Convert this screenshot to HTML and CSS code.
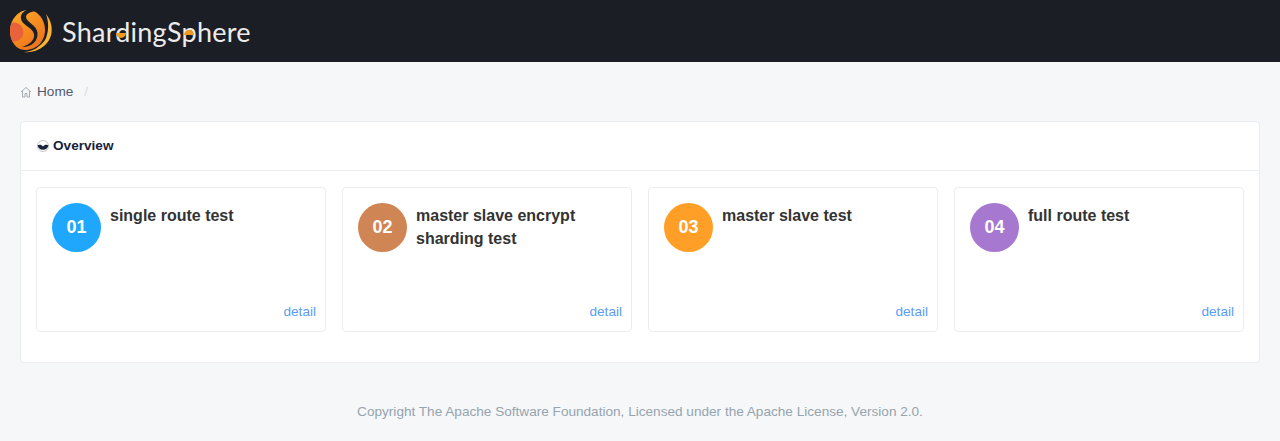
FILE: index.html
```html
<!DOCTYPE html>
<html lang="en">
<head>
<meta charset="utf-8">
<title>ShardingSphere</title>
<link rel="stylesheet" href="styles.css">
</head>
<body>
<header class="topbar">
  <svg class="logo-mark" viewBox="9 7 46 48" width="46" height="48" aria-hidden="true">
    <defs>
      <linearGradient id="fl" x1="0" y1="0" x2="0.6" y2="1">
        <stop offset="0" stop-color="#fbb02a"/>
        <stop offset="0.6" stop-color="#f58a1f"/>
        <stop offset="1" stop-color="#ee7420"/>
      </linearGradient>
      <clipPath id="massclip">
        <path d="M28 10C38 10 45 20 45 30C45 41 37 50 25 50C16 50 10 41 10 31C10 20 18 10 28 10Z"/>
      </clipPath>
    </defs>
    <path d="M46 14C54 24 54 38 44 46C38 51 30 53 24 52C32 52 40 47 45 40C49 33 49 22 46 14Z" fill="#f9b233"/>
    <path d="M28 10C38 10 45 20 45 30C45 41 37 50 25 50C16 50 10 41 10 31C10 20 18 10 28 10Z" fill="url(#fl)"/>
    <circle cx="14" cy="32" r="9.5" fill="#e8623a" clip-path="url(#massclip)"/>
    <path d="M32 8C24 10 20 14 21 19C22 25 32 27 34 34C35 39 31 44 22 47C32 47 38 41 37.5 33C37 25 26 22 26 17C26 14 30 12 35 11Z" fill="#1c1e26"/>
  </svg>
  <span class="logo-text">Sharding<span class="logo-half logo-half-low"></span>Sphere<span class="logo-half logo-half-high"></span></span>
</header>
<nav class="crumbs">
  <svg class="home-icon" viewBox="0 0 12 12" width="12" height="12" aria-hidden="true">
    <path d="M1 6L6 1.5L11 6M2.5 5V11H5V7.5H7V11H9.5V5" fill="none" stroke="#a4abb3" stroke-width="1"/>
  </svg>
  <a class="crumb-link">Home</a>
  <span class="crumb-sep">/</span>
</nav>
<main class="panel">
  <div class="panel-head">
    <svg class="panel-icon" viewBox="0 0 12 12" width="12" height="12" aria-hidden="true">
      <circle cx="6" cy="6" r="5.5" fill="#fff" stroke="#b9b4b2" stroke-width="0.8"/>
      <path d="M0.6 5.2C2.5 4.2 4.6 4.6 6 6.4C7.4 4.6 9.5 4.2 11.4 5.2A5.5 5.5 0 0 1 0.6 5.2Z" fill="#17233d"/>
    </svg>
    <span class="panel-title">Overview</span>
  </div>
  <div class="panel-body">
    <article class="tile">
      <div class="tile-main"><span class="badge badge-blue">01</span><span class="tile-title">single route test</span></div>
      <a class="tile-link">detail</a>
    </article>
    <article class="tile">
      <div class="tile-main"><span class="badge badge-brown">02</span><span class="tile-title">master slave encrypt sharding test</span></div>
      <a class="tile-link">detail</a>
    </article>
    <article class="tile">
      <div class="tile-main"><span class="badge badge-orange">03</span><span class="tile-title">master slave test</span></div>
      <a class="tile-link">detail</a>
    </article>
    <article class="tile">
      <div class="tile-main"><span class="badge badge-purple">04</span><span class="tile-title">full route test</span></div>
      <a class="tile-link">detail</a>
    </article>
  </div>
</main>
<footer class="foot">Copyright The Apache Software Foundation, Licensed under the Apache License, Version 2.0.</footer>
</body>
</html>
```
FILE: styles.css
```css
* { box-sizing: border-box; }
html, body { margin: 0; padding: 0; }
body {
  height: 441px;
  overflow: hidden;
  background: #f5f7f9;
  color: #515a6e;
  font-family: "Liberation Sans", Arial, sans-serif;
  font-size: 13.6px;
}
.topbar {
  height: 62px;
  background: #1c1e26;
  display: flex;
  align-items: center;
  padding-left: 9px;
}
.logo-mark { flex: none; }
.logo-text {
  position: relative;
  top: 1px;
  margin-left: 7px;
  color: #ececec;
  font-family: Lato, sans-serif;
  font-weight: 400;
  font-size: 27px;
  line-height: 32px;
  letter-spacing: 0.25px;
}
.logo-half {
  position: absolute;
  width: 10px;
  height: 5px;
  background: #f39a1e;
}
.logo-half-low {
  top: 17px;
  left: 54px;
  border-radius: 0 0 5px 5px;
}
.logo-half-high {
  top: 14px;
  left: 122px;
  border-radius: 5px 5px 0 0;
}
.crumbs {
  height: 59px;
  padding: 0 20px;
  display: flex;
  align-items: center;
}
.home-icon { margin-right: 5px; }
.crumb-link { color: #515a6e; }
.crumb-sep { margin-left: 11px; color: #dcdee2; }
.panel {
  margin: 0 20px;
  height: 242px;
  background: #fff;
  border: 1px solid #ebedf0;
  border-radius: 4px;
}
.panel-head {
  height: 49px;
  padding: 0 16px 1px;
  display: flex;
  align-items: center;
  border-bottom: 1px solid #ebedf0;
}
.panel-icon { margin-right: 4px; }
.panel-title { color: #17233d; font-weight: 700; }
.panel-body {
  padding: 16px 15px;
  display: grid;
  grid-template-columns: repeat(4, 1fr);
  gap: 16px;
}
.tile {
  height: 145px;
  padding: 15px 9px 11px 15px;
  background: #fff;
  border: 1px solid #ebedf0;
  border-radius: 4px;
  display: flex;
  flex-direction: column;
  justify-content: space-between;
}
.tile-main { display: flex; align-items: flex-start; gap: 9px; }
.badge {
  flex: none;
  width: 49px;
  height: 49px;
  border-radius: 50%;
  color: #fff;
  font-size: 18px;
  font-weight: 700;
  display: flex;
  align-items: center;
  justify-content: center;
}
.badge-blue { background: #1ea7fd; }
.badge-brown { background: #d08654; }
.badge-orange { background: #ff9f27; }
.badge-purple { background: #a678d0; }
.tile-title {
  margin-top: 1px;
  color: #333;
  font-size: 16px;
  font-weight: 700;
  line-height: 23px;
}
.tile-link { align-self: flex-end; color: #5b9cf8; line-height: 16px; }
.foot {
  margin-top: 41px;
  text-align: center;
  color: #97a4ae;
  line-height: 16px;
}
```
